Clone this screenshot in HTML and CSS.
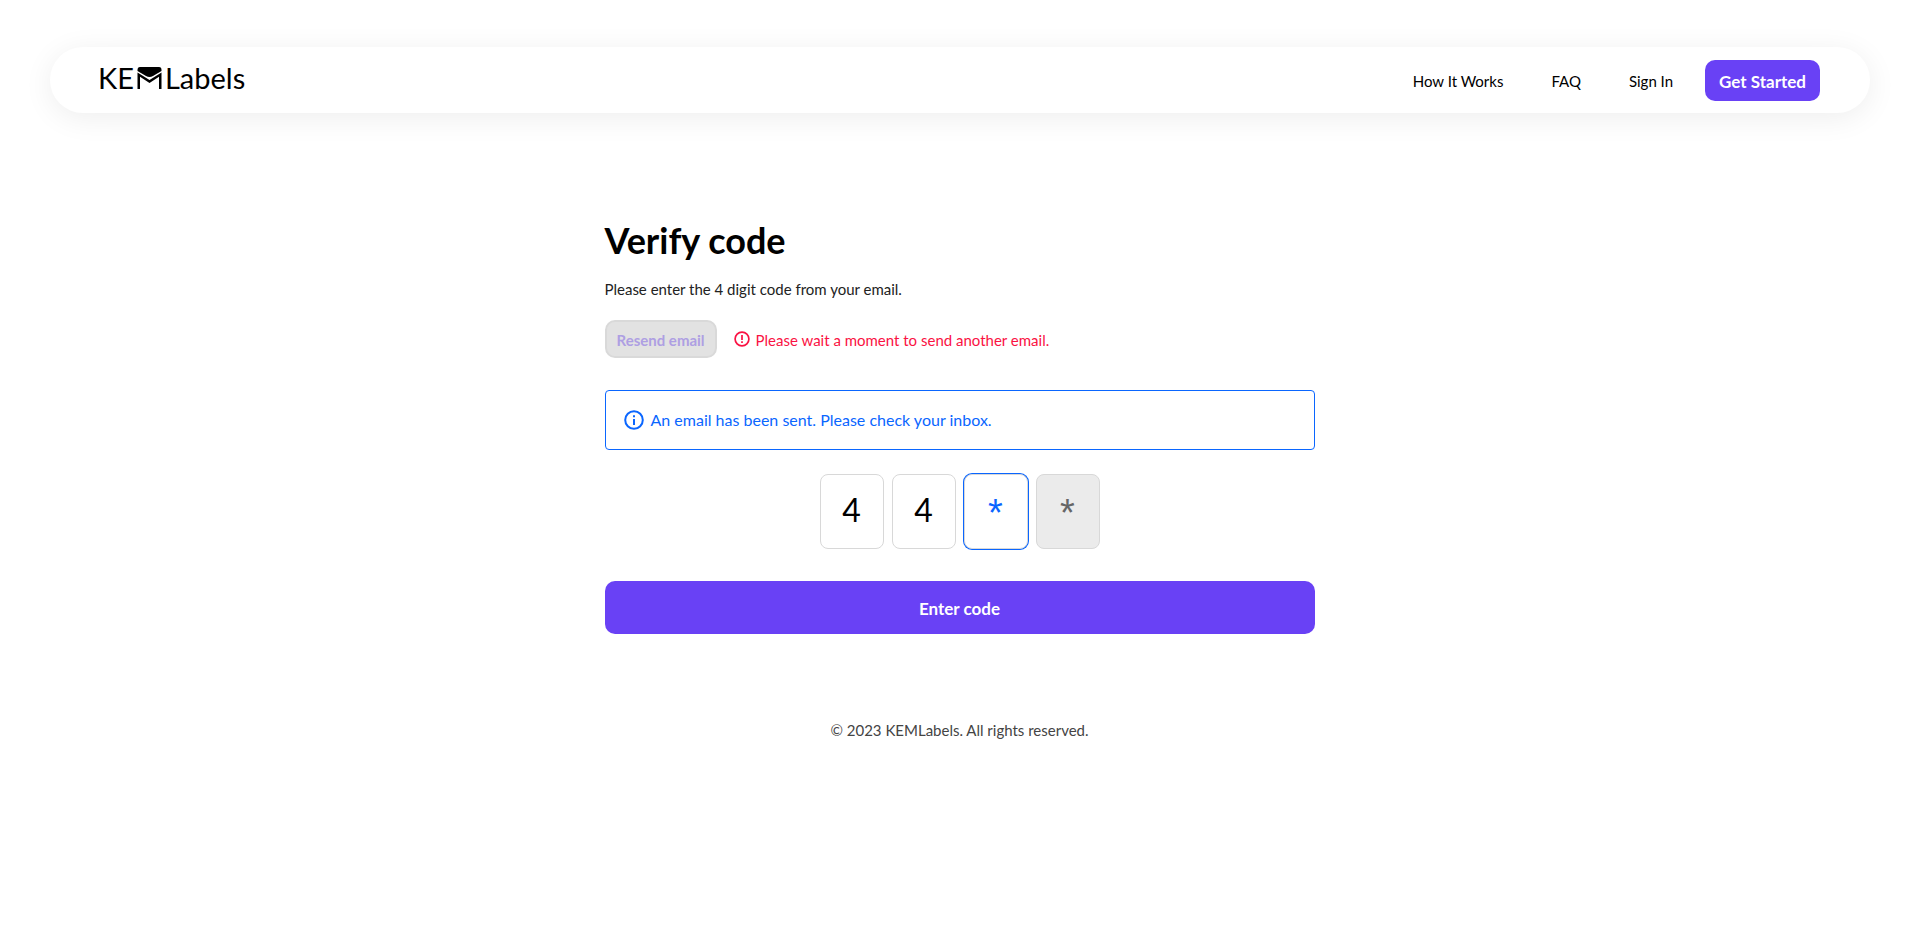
FILE: index.html
```html
<!DOCTYPE html>
<html lang="en">
<head>
<meta charset="utf-8">
<meta name="viewport" content="width=device-width, initial-scale=1">
<title>Verify code</title>
<link rel="stylesheet" href="styles.css">
</head>
<body>
<header class="navbar">
  <a class="logo" href="#" aria-label="KEMLabels">
    <span>KE</span>
    <svg class="logo-mark" viewBox="0 0 25 22" aria-hidden="true">
      <path d="M3 0H22Q24.500 0 24.500 3V4L16 9Q12.500 11 9 9L0.500 4V3Q0.500 0 3 0Z"/>
      <path d="M0.500 5.500L12.500 13L24.500 5.500V22H22V9.800L12.500 16L3 9.800V22H0.500Z"/>
    </svg>
    <span>Labels</span>
  </a>
  <nav class="links">
    <a class="link" href="#">How It Works</a>
    <a class="link" href="#">FAQ</a>
    <a class="link" href="#">Sign In</a>
    <a class="cta" href="#">Get Started</a>
  </nav>
</header>
<main class="verify">
  <h1 class="title">Verify code</h1>
  <p class="intro">Please enter the 4 digit code from your email.</p>
  <div class="resend-row">
    <button class="resend" type="button" disabled>Resend email</button>
    <p class="error">
      <svg class="error-icon" viewBox="0 0 16 16" aria-hidden="true">
        <circle cx="8" cy="8" r="6.900"/>
        <path d="M8 4V9M8 10.300V12"/>
      </svg>
      <span class="error-text">Please wait a moment to send another email.</span>
    </p>
  </div>
  <p class="notice">
    <svg class="notice-icon" viewBox="0 0 20 20" aria-hidden="true">
      <circle cx="10" cy="10" r="8.800"/>
      <path d="M10 9V15M10 5.200V7.200"/>
    </svg>
    An email has been sent. Please check your inbox.
  </p>
  <form class="code-form">
    <div class="digits">
      <input class="digit" type="text" maxlength="1" value="4" aria-label="Digit 1">
      <input class="digit" type="text" maxlength="1" value="4" aria-label="Digit 2">
      <input class="digit digit-active" type="text" maxlength="1" placeholder="*" aria-label="Digit 3">
      <input class="digit" type="text" maxlength="1" placeholder="*" aria-label="Digit 4" disabled>
    </div>
    <button class="submit" type="button">Enter code</button>
  </form>
</main>
<footer class="footer">© 2023 KEMLabels. All rights reserved.</footer>
</body>
</html>
```
FILE: styles.css
```css
* {
  box-sizing: border-box;
}

body {
  margin: 0;
  background: #fff;
  color: #000;
  font-family: Lato, sans-serif;
  font-size: 15px;
  line-height: 24px;
}

h1, p {
  margin: 0;
}

a {
  color: inherit;
  text-decoration: none;
}

.navbar {
  display: flex;
  align-items: center;
  justify-content: space-between;
  margin: 47px 49px 0 50px;
  padding: 13px 50px 12px 48px;
  border-radius: 33px;
  box-shadow: 0 5px 30px rgba(0, 0, 0, 0.07);
}

.logo {
  display: flex;
  align-items: center;
  gap: 3px;
  padding-bottom: 5px;
  font-size: 29px;
  line-height: 36px;
}

.logo-mark {
  width: 25px;
  height: 22px;
}

.links {
  display: flex;
  align-items: center;
}

.link {
  margin-right: 48px;
  padding-top: 1px;
}

.link:nth-child(3) {
  margin-right: 32px;
}

.cta {
  padding: 10px 14px 7px;
  border-radius: 10px;
  background: #6941f5;
  color: #fff;
  font-size: 17px;
  font-weight: 700;
}

.verify {
  max-width: 710px;
  margin: 103px auto 0;
}

.title {
  font-size: 36px;
  font-weight: 700;
  line-height: 48px;
}

.intro {
  margin-top: 13px;
  color: #222;
}

.resend-row {
  display: flex;
  align-items: center;
  gap: 17px;
  margin-top: 19px;
}

.resend {
  height: 38px;
  padding: 2px 10px 0;
  border: 2px solid #d9d9d9;
  border-radius: 10px;
  background: #e2e2e2;
  color: #ae9fe3;
  font: 700 15px Lato, sans-serif;
}

.error {
  display: flex;
  align-items: center;
  gap: 6px;
  color: #fa1243;
}

.error-text {
  padding-top: 2px;
}

.error-icon,
.notice-icon {
  flex: none;
  fill: none;
  stroke: currentColor;
}

.error-icon {
  width: 16px;
  height: 16px;
  stroke-width: 1.700;
}

.notice {
  display: flex;
  align-items: center;
  gap: 7px;
  margin-top: 32px;
  padding: 17px 18px;
  border: 1px solid #0a66ff;
  border-radius: 4px;
  color: #0a66ff;
  font-size: 16px;
}

.notice-icon {
  width: 20px;
  height: 20px;
  stroke-width: 2;
}

.digits {
  display: flex;
  justify-content: center;
  gap: 8px;
  margin-top: 24px;
}

.digit {
  width: 64px;
  height: 75px;
  padding: 0 0 4px;
  border: 1px solid #d8d8d8;
  border-radius: 8px;
  background: #fff;
  color: #000;
  font: 32px Lato, sans-serif;
  text-align: center;
}

.digit:placeholder-shown {
  padding: 4px 0 0;
  font: 38px "Liberation Sans", sans-serif;
}

.digit::placeholder {
  color: #666;
  opacity: 1;
}

.digit:disabled {
  background: #ebebeb;
}

.digit-active {
  box-shadow: 0 0 0 1px #0a66ff;
}

.digit-active::placeholder {
  color: #0a66ff;
}

.submit {
  width: 100%;
  height: 53px;
  margin-top: 32px;
  padding: 2px 0 0;
  border: 0;
  border-radius: 10px;
  background: #6941f5;
  color: #fff;
  font: 700 17px Lato, sans-serif;
}

.footer {
  margin-top: 84px;
  color: #444;
  text-align: center;
}
```
